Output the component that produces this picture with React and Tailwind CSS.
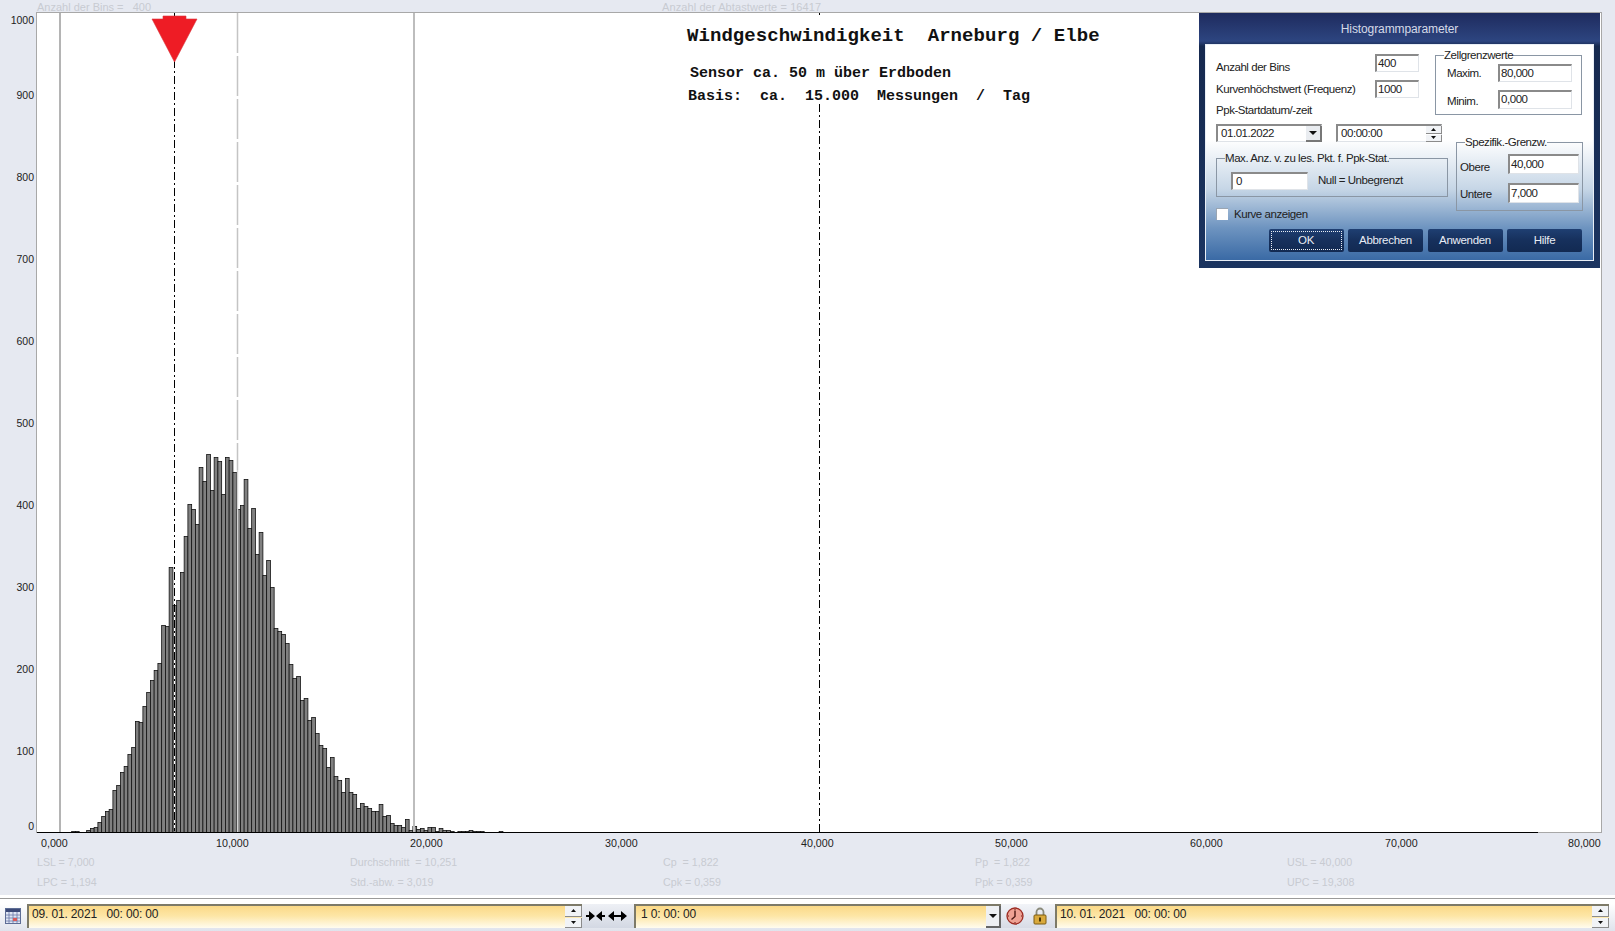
import React from "react";

const BARS = {3:1,4:1,7:2,8:4,9:5,10:10,11:16,12:21,13:23,14:42,15:47,16:60,17:66,18:78,19:85,20:111,21:110,22:126,23:140,24:152,25:162,26:169,27:207,28:206,29:265,30:227,31:232,32:260,33:296,34:328,35:323,36:308,37:365,38:351,39:378,40:342,41:375,42:371,43:338,44:375,45:372,46:360,47:323,48:327,49:353,50:304,51:324,52:278,53:300,54:257,55:272,56:245,57:204,58:201,59:198,60:189,61:168,62:154,63:156,64:132,65:134,66:112,67:115,68:99,69:87,70:84,71:65,72:75,73:56,74:52,75:40,76:54,77:40,78:38,79:24,80:29,81:26,82:24,83:21,84:21,85:28,86:16,87:17,88:9,89:7,90:7,91:5,92:13,93:2,94:6,95:3,96:4,97:2,98:5,99:5,100:1,101:4,102:2,103:2,104:1,106:1,107:1,108:1,109:2,110:1,111:1,112:1,117:1};

const BASE = 832;
const X0 = 60.4;
const PITCH = 3.75;

function Chart() {
  const rects = Object.entries(BARS).map(([k, h]) => {
    const i = Number(k);
    return <rect key={k} x={X0 + i * PITCH} y={BASE - h + 0.5} width={PITCH} height={h} fill="#808080" stroke="#111" strokeWidth="0.8" />;
  });
  return (
    <svg className="absolute inset-0" width="1565" height="820" viewBox="37 13 1565 820">
      <line x1="60" y1="13" x2="60" y2="832" stroke="#b4b4b4" strokeWidth="2" />
      {rects}
      <line x1="174.5" y1="60" x2="174.5" y2="831" stroke="#fff" strokeWidth="1" />
      <line x1="174.5" y1="60" x2="174.5" y2="831" stroke="#000" strokeWidth="1" strokeDasharray="8 3 2 3" />
      <line x1="237.5" y1="13" x2="237.5" y2="470" stroke="#c4c4c4" strokeWidth="1.5" strokeDasharray="40 3" />
      <line x1="237.5" y1="470" x2="237.5" y2="832" stroke="#d2d2d2" strokeWidth="1.5" />
      <line x1="414" y1="13" x2="414" y2="832" stroke="#bdbdbd" strokeWidth="2" />
      <line x1="819.5" y1="104" x2="819.5" y2="832" stroke="#000" strokeWidth="1" strokeDasharray="8 3 2 3" />
      <line x1="819.5" y1="13" x2="819.5" y2="15" stroke="#000" strokeWidth="1" />
      <line x1="174.5" y1="13" x2="174.5" y2="17" stroke="#000" strokeWidth="1" />
      <line x1="37" y1="832.5" x2="1538" y2="832.5" stroke="#000" strokeWidth="1" />
      <polygon points="163,16 186,16 186,19 197,19 174.5,62 152,19 163,19" fill="#ee1c25" stroke="#d9363c" strokeWidth="0.6" />
    </svg>
  );
}

const TXT = "text-[11.5px] tracking-[-0.45px] text-[#222] leading-[14px]";

function Input({ w, h = "h-[18px]", children }) {
  return (
    <div className={`${w} ${h} shrink-0 bg-white border-t-2 border-l-2 border-t-[#8a8a8a] border-l-[#8a8a8a] border-r border-b border-r-[#dfe3e8] border-b-[#dfe3e8] pl-[1px] flex items-center text-[11.5px] tracking-[-0.45px] text-[#222]`}>
      {children}
    </div>
  );
}

function Spin({ className = "" }) {
  return (
    <div className={`flex flex-col gap-[1px] ${className}`}>
      <div className="flex-1 bg-[#f1f3f6] border-r border-b border-[#8b8b8b] flex items-center justify-center">
        <svg width="5" height="3"><polygon points="2.5,0 5,3 0,3" fill="#111" /></svg>
      </div>
      <div className="flex-1 bg-[#f1f3f6] border-r border-b border-[#8b8b8b] flex items-center justify-center">
        <svg width="5" height="3"><polygon points="0,0 5,0 2.5,3" fill="#111" /></svg>
      </div>
    </div>
  );
}

function Btn({ children, focus }) {
  return (
    <div className="w-[75px] h-[23px] rounded-[2px] bg-[linear-gradient(#1f3f72,#16305c_50%,#122a52)] flex items-center justify-center text-[11.5px] tracking-[-0.3px] text-[#e8edf5] relative">
      {focus && <div className="absolute inset-[2px] border border-dotted border-[#e8edf5]" />}
      {children}
    </div>
  );
}

function Dialog() {
  return (
    <div className="absolute left-[1199px] top-[13px] w-[401px] h-[255px] bg-[linear-gradient(#1e2b5e,#2d4580_11%,#16294f_13%,#1b3460)] px-[6px] pb-[7px] flex flex-col font-['Liberation_Sans',sans-serif]">
      <div className="h-[31px] shrink-0 flex items-center justify-center text-[12px] tracking-[-0.1px] text-[#d5dae8]">Histogrammparameter</div>
      <div className="flex-1 border border-[#e8eef6] bg-[linear-gradient(#fff_44%,#c6d6e6_67%,#6e94c0_85%,#3a6aa5)] pl-[10px] pr-[11px] flex flex-col">
        <div className="flex h-[176px]">
          <div className="w-[232px] shrink-0 pt-[9px] flex flex-col">
            <div className="flex items-center h-[18px]">
              <div className={`w-[159px] ${TXT} translate-y-[4px]`}>Anzahl der Bins</div>
              <Input w="w-[44px]">400</Input>
            </div>
            <div className="flex items-center h-[18px] mt-[8px]">
              <div className={`w-[159px] ${TXT}`}>Kurvenhöchstwert (Frequenz)</div>
              <Input w="w-[44px]">1000</Input>
            </div>
            <div className={`${TXT} mt-[5px]`}>Ppk-Startdatum/-zeit</div>
            <div className="flex gap-[14px] mt-[7px]">
              <div className="w-[106px] relative">
                <Input w="w-[106px]"><span className="pl-[2px]">01.01.2022</span></Input>
                <div className="absolute right-0 top-[2px] w-[16px] h-[16px] bg-[#e9ecf0] border-r-2 border-b-2 border-[#777] flex items-center justify-center">
                  <svg width="8" height="4"><polygon points="0,0 8,0 4,4" fill="#111" /></svg>
                </div>
              </div>
              <div className="w-[106px] relative">
                <Input w="w-[106px]"><span className="pl-[2px]">00:00:00</span></Input>
                <Spin className="absolute right-0 top-[2px] w-[16px] h-[16px]" />
              </div>
            </div>
            <fieldset className="mt-[9px] h-[46px] border border-[#8a96a4] rounded-none flex">
              <legend className="ml-[8px] h-[14px] text-[11.5px] tracking-[-0.45px] text-[#222] leading-[14px]">Max. Anz. v. zu les. Pkt. f. Ppk-Stat.</legend>
              <div className="flex items-center pl-[14px] pt-[7px]">
                <Input w="w-[77px]"><span className="pl-[2px]">0</span></Input>
                <div className={`${TXT} ml-[10px] -translate-y-[1px]`}>Null = Unbegrenzt</div>
              </div>
            </fieldset>
            <div className="flex items-center mt-[11px] h-[12px]">
              <div className="w-[12px] h-[12px] bg-white border-t border-l border-[#9aa5b2]" />
              <div className={`${TXT} ml-[6px]`}>Kurve anzeigen</div>
            </div>
          </div>
          <div className="w-[148px] shrink-0 -ml-[13px] pt-[3px] flex flex-col">
            <fieldset className="h-[67px] w-[147px] border border-[#8a96a4]">
              <legend className="ml-[8px] h-[14px] text-[11.5px] tracking-[-0.45px] text-[#222] leading-[14px]">Zellgrenzwerte</legend>
              <div className="flex items-center pl-[11px] mt-[2px]">
                <div className={`w-[51px] ${TXT}`}>Maxim.</div>
                <Input w="w-[74px]">80,000</Input>
              </div>
              <div className="flex items-center pl-[11px] mt-[8px]">
                <div className={`w-[51px] ${TXT} translate-y-[1px]`}>Minim.</div>
                <Input w="w-[74px]" h="h-[19px]">0,000</Input>
              </div>
            </fieldset>
            <fieldset className="h-[76px] w-[127px] ml-[21px] mt-[20px] border border-[#8a96a4]">
              <legend className="ml-[8px] h-[14px] text-[11.5px] tracking-[-0.45px] text-[#222] leading-[14px]">Spezifik.-Grenzw.</legend>
              <div className="flex items-center pl-[3px] mt-[5px]">
                <div className={`w-[48px] ${TXT} translate-y-[3px]`}>Obere</div>
                <Input w="w-[71px]" h="h-[20px]">40,000</Input>
              </div>
              <div className="flex items-center pl-[3px] mt-[9px]">
                <div className={`w-[48px] ${TXT} translate-y-[1px]`}>Untere</div>
                <Input w="w-[71px]" h="h-[20px]">7,000</Input>
              </div>
            </fieldset>
          </div>
        </div>
        <div className="flex justify-end gap-[4.5px] mt-[8px]">
          <Btn focus>OK</Btn>
          <Btn>Abbrechen</Btn>
          <Btn>Anwenden</Btn>
          <Btn>Hilfe</Btn>
        </div>
      </div>
    </div>
  );
}

function YellowField({ w, children, spin, drop, pad = "pl-[3px]" }) {
  return (
    <div className={`${w} h-[24px] shrink-0 border-t-2 border-l-2 border-t-[#7d7a68] border-l-[#7d7a68] bg-[linear-gradient(#fbd987,#fde6a6_45%,#fffcef)] flex items-center justify-between text-[12px] text-[#222] whitespace-pre tracking-[-0.15px]`}>
      <span className={`${pad} -translate-y-[3px]`}>{children}</span>
      {spin && <Spin className="w-[17px] h-[22px] shrink-0" />}
      {drop && (
        <div className="w-[15px] h-[22px] bg-[#eef0f3] border-r-2 border-b-2 border-[#666] flex items-center justify-center shrink-0">
          <svg width="8" height="4"><polygon points="0,0 8,0 4,4" fill="#111" /></svg>
        </div>
      )}
    </div>
  );
}

const Y = [["1000", "h-[75px]"], ["900", "h-[82px]"], ["800", "h-[82px]"], ["700", "h-[82px]"], ["600", "h-[82px]"], ["500", "h-[82px]"], ["400", "h-[82px]"], ["300", "h-[82px]"], ["200", "h-[82px]"], ["100", "h-[75px]"], ["0", "h-[14px]"]];
const X = [["0,000", "w-[175px]"], ["10,000", "w-[194px]"], ["20,000", "w-[195px]"], ["30,000", "w-[196px]"], ["40,000", "w-[194px]"], ["50,000", "w-[195px]"], ["60,000", "w-[195px]"], ["70,000", "w-[183px]"], ["80,000", "w-[40px]"]];
const S1 = ["LSL = 7,000", "Durchschnitt  = 10,251", "Cp  = 1,822", "Pp  = 1,822", "USL = 40,000"];
const S2 = ["LPC = 1,194", "Std.-abw. = 3,019", "Cpk = 0,359", "Ppk = 0,359", "UPC = 19,308"];

export default function App() {
  return (
    <div className="relative w-[1615px] h-[931px] overflow-hidden bg-[#e6e9f1] flex flex-col font-['Liberation_Sans',sans-serif]">
      <div className="h-[12px] shrink-0 pl-[37px] grid grid-cols-[625px_400px] text-[11px] leading-[14px] text-[#c8cbd2] whitespace-pre">
        <div>Anzahl der Bins =   400</div>
        <div className="tracking-[0.1px]">Anzahl der Abtastwerte = 16417</div>
      </div>
      <div className="h-[821px] shrink-0 flex">
        <div className="w-[36px] shrink-0 pr-[2px] pt-[1px] flex flex-col items-end text-[10.5px] leading-[14px] text-[#222]">
          {Y.map(([t, h]) => <div key={t} className={`${h} shrink-0`}>{t}</div>)}
        </div>
        <div className="w-[1566px] h-[821px] shrink-0 relative bg-white border border-[#a8a8a8]">
          <Chart />
          <div className="absolute left-[650px] top-[11px] font-['Liberation_Mono',monospace] font-bold text-[#111] whitespace-pre flex flex-col">
            <div className="text-[19px] leading-[24px] tracking-[0.06px]">Windgeschwindigkeit  Arneburg / Elbe</div>
            <div className="text-[15px] leading-[20px] mt-[16px] ml-[3px]">Sensor ca. 50 m über Erdboden</div>
            <div className="text-[15px] leading-[20px] mt-[3px] ml-[1px]">Basis:  ca.  15.000  Messungen  /  Tag</div>
          </div>
        </div>
      </div>
      <div className="h-[20px] shrink-0 pl-[41px] flex items-center text-[10.7px] text-[#222]">
        {X.map(([t, w]) => <div key={t} className={`${w} shrink-0`}>{t}</div>)}
      </div>
      <div className="h-[18px] shrink-0 pl-[37px] grid grid-cols-[313px_313px_312px_312px_300px] items-center text-[10.7px] text-[#c8cbd2] whitespace-pre">
        {S1.map((t) => <div key={t}>{t}</div>)}
      </div>
      <div className="h-[22px] shrink-0 pl-[37px] grid grid-cols-[313px_313px_312px_312px_300px] items-center text-[10.7px] text-[#c8cbd2] whitespace-pre">
        {S2.map((t) => <div key={t}>{t}</div>)}
      </div>
      <div className="h-[2px] shrink-0" />
      <div className="h-[3px] shrink-0 bg-white" />
      <div className="h-[1px] shrink-0 bg-[#9a9a9a]" />
      <div className="flex-1 bg-[linear-gradient(#fff,#fff_15%,#dfe3ec)] pt-[5px] flex items-start">
        <div className="w-[27px] shrink-0 pl-[5px] pt-[4px]">
          <svg width="16" height="16" viewBox="0 0 16 16">
            <rect x="0.5" y="0.5" width="15" height="15" fill="#dfe6f4" stroke="#5d6d95" />
            <rect x="1" y="1" width="14" height="3" fill="#3c4a78" />
            <path d="M1 7h14M1 10h14M1 13h14M4 4v11M8 4v11M12 4v11" stroke="#6a78a8" strokeWidth="0.8" />
            <rect x="8" y="10" width="4" height="3" fill="#d85a5a" />
          </svg>
        </div>
        <YellowField w="w-[555px]" spin>09. 01. 2021   00: 00: 00</YellowField>
        <div className="w-[52px] h-[24px] shrink-0 pl-[4px] flex items-center bg-[linear-gradient(#eef0f5,#d3d8e3)]">
          <svg width="44" height="14" viewBox="0 0 44 14">
            <path d="M0 6h3V2l6 5-6 5V8H0z" fill="#000" />
            <path d="M19 6h-3V2l-6 5 6 5V8h3z" fill="#000" />
            <path d="M31 6h-3V2l-6 5 6 5V8h3z" fill="#000" />
            <path d="M31 6h4V2l6 5-6 5V8h-4z" fill="#000" />
          </svg>
        </div>
        <YellowField w="w-[367px]" drop pad="pl-[5px]">1 0: 00: 00</YellowField>
        <div className="w-[54px] h-[24px] shrink-0 pl-[5px] flex items-center gap-[9px] bg-[linear-gradient(#f2f4f8,#d8dce6)]">
          <svg width="18" height="18" viewBox="0 0 18 18">
            <circle cx="9" cy="9" r="8" fill="#eea193" stroke="#9c2b22" strokeWidth="1.3" />
            <path d="M9 3.5v6l-3.5 3" stroke="#4a1712" strokeWidth="1.4" fill="none" />
            <path d="M9 2v1M9 15v1M2 9h1M15 9h1" stroke="#6d1c15" strokeWidth="1" />
          </svg>
          <svg width="14" height="18" viewBox="0 0 14 18">
            <path d="M3.5 8V5a3.5 3.5 0 0 1 7 0v3" fill="none" stroke="#8a8a7a" strokeWidth="1.8" />
            <rect x="1" y="8" width="12" height="9" rx="1" fill="#d9a93c" stroke="#7d5c12" />
            <rect x="6" y="10.5" width="2" height="4" fill="#4a3608" />
          </svg>
        </div>
        <YellowField w="w-[554px]" spin>10. 01. 2021   00: 00: 00</YellowField>
      </div>
      <Dialog />
    </div>
  );
}
